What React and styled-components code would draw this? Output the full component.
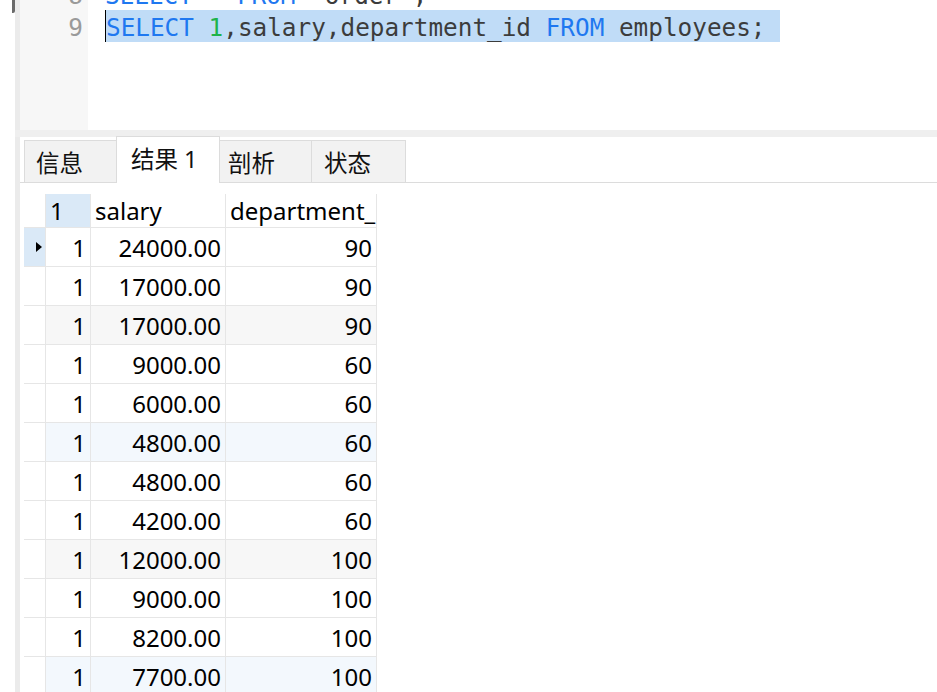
import React from 'react';
import styled, { createGlobalStyle } from 'styled-components';

const GlobalStyle = createGlobalStyle`
    html, body {
        margin: 0;
        background: #ffffff;
        overflow: hidden;
    }
`;

const Page = styled.div`
    display: flex;
    width: 937px;
    height: 692px;
    overflow: hidden;
    font-family: "Noto Sans", "Noto Sans CJK SC", sans-serif;
`;

const Margin = styled.div`
    width: 15px;
    flex-shrink: 0;
    background: #ffffff;
    position: relative;
`;

const Fragment = styled.div`
    position: absolute;
    left: 12px;
    top: -2px;
    width: 3px;
    height: 15px;
    border-radius: 0 2px 2px 0;
    background: #6a6a6a;
`;

const Strip = styled.div`
    width: 5px;
    flex-shrink: 0;
    background: #ebebeb;
`;

const Main = styled.div`
    flex: 1;
    display: flex;
    flex-direction: column;
    min-width: 0;
`;

const Editor = styled.div`
    display: flex;
    height: 130px;
    flex-shrink: 0;
    overflow: hidden;
`;

const Gutter = styled.div`
    width: 68px;
    flex-shrink: 0;
    background: #f7f7f7;
    padding-right: 5px;
    box-sizing: border-box;
`;

const Lines = styled.div`
    margin-top: -22px;
    font-family: "DejaVu Sans Mono", "Liberation Mono", monospace;
    font-size: 24.35px;
`;

const LineNo = styled.div`
    height: 32px;
    line-height: 36px;
    text-align: right;
    color: #9a9a9a;
`;

const CodeArea = styled.div`
    flex: 1;
    padding-left: 17px;
    background: #ffffff;
`;

const CodeLine = styled.div`
    display: flex;
    height: 32px;
    line-height: 36px;
    white-space: pre;
    color: #3c3c3c;
`;

const Caret = styled.span`
    width: 1px;
    height: 32px;
    background: #000000;
`;

const Selection = styled.span`
    display: inline-block;
    height: 32px;
    padding-right: 1ch;
    background: #c0dcf7;
`;

const Kw = styled.span`
    color: #1f78f0;
`;

const Num = styled.span`
    color: #1fb34a;
`;

const Band = styled.div`
    height: 7px;
    flex-shrink: 0;
    background: #efefef;
    margin-left: -5px;
`;

const TabBar = styled.div`
    display: flex;
    align-items: flex-end;
    height: 46px;
    flex-shrink: 0;
    padding-left: 4px;
    border-bottom: 1px solid #dcdcdc;
    box-sizing: border-box;
`;

const Tab = styled.div`
    width: ${p => p.$w}px;
    height: ${p => (p.$active ? 47 : 42)}px;
    margin-bottom: ${p => (p.$active ? -1 : 0)}px;
    padding-left: ${p => p.$pl}px;
    box-sizing: border-box;
    display: flex;
    align-items: center;
    background: ${p => (p.$active ? '#ffffff' : '#f2f2f2')};
    border: 1px solid #dcdcdc;
    border-bottom: none;
    margin-right: -1px;
    font-family: "Noto Sans", "Noto Sans CJK SC", sans-serif;
    font-size: 23.5px;
    color: #111111;
    padding-bottom: ${p => (p.$active ? 4 : 0)}px;
`;

const GridArea = styled.div`
    padding: 11px 0 0 4px;
`;

const Row = styled.div`
    display: grid;
    grid-template-columns: 22px 45px 135px 151px;
    width: 353px;
    height: ${p => (p.$header ? 34 : 39)}px;
    box-sizing: border-box;
    border-bottom: 1px solid #e6e6e6;
    background: ${p => p.$tint || 'transparent'};
`;

const Cell = styled.div`
    box-sizing: border-box;
    border-right: 1px solid #e6e6e6;
    display: flex;
    align-items: center;
    justify-content: ${p => (p.$left ? 'flex-start' : 'flex-end')};
    padding: 0 4px;
    overflow: hidden;
    white-space: nowrap;
    font-size: 24px;
    color: #000000;
    background: ${p => p.$bg || 'transparent'};
`;

const RowHead = styled.div`
    box-sizing: border-box;
    border-right: 1px solid #e6e6e6;
    display: flex;
    align-items: center;
    justify-content: flex-end;
    padding-right: 3px;
    background: ${p => (p.$current ? '#dae9f7' : '#ffffff')};
`;

const Pointer = styled.span`
    width: 0;
    height: 0;
    border-top: 5px solid transparent;
    border-bottom: 5px solid transparent;
    border-left: 6px solid #000000;
`;

const rows = [
    ['24000.00', 90],
    ['17000.00', 90],
    ['17000.00', 90],
    ['9000.00', 60],
    ['6000.00', 60],
    ['4800.00', 60],
    ['4800.00', 60],
    ['4200.00', 60],
    ['12000.00', 100],
    ['9000.00', 100],
    ['8200.00', 100],
    ['7700.00', 100],
];

const tabs = [
    { label: '信息', w: 93, pl: 11 },
    { label: '结果 1', w: 104, pl: 14, active: true },
    { label: '剖析', w: 93, pl: 8 },
    { label: '状态', w: 95, pl: 12 },
];

const tintFor = i => {
    if (i % 3 !== 2) return null;
    return (i % 6 === 2) ? '#f7f7f7' : '#f3f8fd';
};

const App = () => {
    return (
        <>
            <GlobalStyle />
            <Page>
                <Margin>
                    <Fragment />
                </Margin>
                <Strip />
                <Main>
                    <Editor>
                        <Gutter>
                            <Lines>
                                <LineNo>8</LineNo>
                                <LineNo>9</LineNo>
                            </Lines>
                        </Gutter>
                        <CodeArea>
                            <Lines>
                                <CodeLine>
                                    {' '}<Kw>SELECT</Kw> * <Kw>FROM</Kw> `order`;
                                </CodeLine>
                                <CodeLine>
                                    <Caret />
                                    <Selection>
                                        <Kw>SELECT</Kw> <Num>1</Num>,salary,department_id <Kw>FROM</Kw> employees;
                                    </Selection>
                                </CodeLine>
                            </Lines>
                        </CodeArea>
                    </Editor>
                    <Band />
                    <TabBar>
                        {tabs.map(t => (
                            <Tab key={t.label} $w={t.w} $pl={t.pl} $active={t.active}>
                                {t.label}
                            </Tab>
                        ))}
                    </TabBar>
                    <GridArea>
                        <Row $header>
                            <RowHead />
                            <Cell $left $bg="#dae9f7">1</Cell>
                            <Cell $left>salary</Cell>
                            <Cell $left>department_id</Cell>
                        </Row>
                        {rows.map(([salary, dept], i) => (
                            <Row key={i} $tint={tintFor(i)}>
                                <RowHead $current={i === 0}>
                                    {i === 0 && <Pointer />}
                                </RowHead>
                                <Cell>1</Cell>
                                <Cell>{salary}</Cell>
                                <Cell>{dept}</Cell>
                            </Row>
                        ))}
                    </GridArea>
                </Main>
            </Page>
        </>
    );
}

export default App;
